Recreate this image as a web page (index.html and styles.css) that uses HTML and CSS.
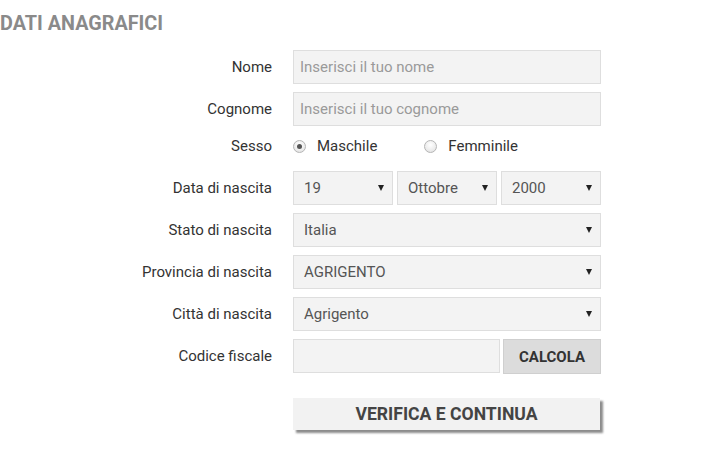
FILE: index.html
```html
<!DOCTYPE html>
<html lang="it">
<head>
<meta charset="utf-8">
<title>Dati anagrafici</title>
<link rel="stylesheet" href="styles.css">
</head>
<body>
<h2 class="title">DATI ANAGRAFICI</h2>
<form class="form">
  <label class="lbl">Nome</label>
  <div class="field"><input class="inp" type="text" placeholder="Inserisci il tuo nome"></div>

  <label class="lbl">Cognome</label>
  <div class="field"><input class="inp" type="text" placeholder="Inserisci il tuo cognome"></div>

  <label class="lbl lbl-radio">Sesso</label>
  <div class="field radios">
    <span class="radio-opt"><span class="radio checked"></span>Maschile</span>
    <span class="radio-opt"><span class="radio"></span>Femminile</span>
  </div>

  <label class="lbl">Data di nascita</label>
  <div class="field dates">
    <div class="sel"><span>19</span><i class="arrow"></i></div>
    <div class="sel"><span>Ottobre</span><i class="arrow"></i></div>
    <div class="sel"><span>2000</span><i class="arrow"></i></div>
  </div>

  <label class="lbl">Stato di nascita</label>
  <div class="field"><div class="sel"><span>Italia</span><i class="arrow"></i></div></div>

  <label class="lbl">Provincia di nascita</label>
  <div class="field"><div class="sel"><span>AGRIGENTO</span><i class="arrow"></i></div></div>

  <label class="lbl">Città di nascita</label>
  <div class="field"><div class="sel"><span>Agrigento</span><i class="arrow"></i></div></div>

  <label class="lbl">Codice fiscale</label>
  <div class="field cf">
    <input class="inp" type="text">
    <button type="button" class="btn-calc">CALCOLA</button>
  </div>

  <div class="spacer"></div>
  <div class="field submit-wrap">
    <button type="button" class="btn-submit">VERIFICA E CONTINUA</button>
  </div>
</form>
</body>
</html>
```

FILE: styles.css
```css
html, body {
  margin: 0;
  padding: 0;
  background: #ffffff;
}
html {
  min-height: 100%;
}
body {
  min-height: 450px;
  font-family: Roboto, "Liberation Sans", sans-serif;
  font-size: 15px;
  color: #333333;
}
.title {
  margin: 0;
  padding: 13px 0 0 0;
  font-size: 19.8px;
  line-height: 22px;
  font-weight: 700;
  color: #8a8a8a;
}
.form {
  margin-top: 15px;
  padding-bottom: 20px;
  display: grid;
  grid-template-columns: 272px 308px;
  grid-template-rows: 34px 34px 29px 34px 34px 34px 34px 34px 52px;
  column-gap: 21px;
  row-gap: 8px;
}
.lbl {
  display: flex;
  align-items: center;
  justify-content: flex-end;
  font-size: 15px;
  color: #333333;
}
.lbl-radio {
  align-self: start;
  height: 24px;
}
.field {
  display: flex;
  min-width: 0;
}
.inp {
  box-sizing: border-box;
  width: 100%;
  height: 34px;
  margin: 0;
  padding: 0 6px;
  border: 1px solid #dedede;
  background: #f3f3f3;
  font-family: Roboto, "Liberation Sans", sans-serif;
  font-size: 15px;
  color: #555555;
  outline: none;
}
.inp::placeholder {
  color: #9a9a9a;
  opacity: 1;
}
.radios {
  align-items: center;
  height: 24px;
  align-self: start;
}
.radio-opt {
  display: inline-flex;
  align-items: center;
  font-size: 15px;
  color: #333333;
}
.radio-opt + .radio-opt {
  margin-left: 47px;
}
.radio {
  box-sizing: border-box;
  width: 13px;
  height: 13px;
  border-radius: 50%;
  border: 1px solid #b5b5b5;
  background: radial-gradient(circle at 50% 35%, #ffffff 0%, #ececec 60%, #dcdcdc 100%);
  margin-right: 11px;
  display: inline-flex;
  align-items: center;
  justify-content: center;
}
.radio.checked::after {
  content: "";
  width: 5px;
  height: 5px;
  border-radius: 50%;
  background: #555555;
}
.dates {
  display: grid;
  grid-template-columns: 100px 100px 100px;
  column-gap: 4px;
}
.sel {
  box-sizing: border-box;
  width: 100%;
  height: 34px;
  border: 1px solid #dedede;
  background: #f3f3f3;
  display: flex;
  align-items: center;
  justify-content: space-between;
  padding: 0 8px 0 10px;
  font-size: 15px;
  color: #555555;
}
.arrow {
  width: 0;
  height: 0;
  border-left: 3px solid transparent;
  border-right: 3px solid transparent;
  border-top: 6px solid #222222;
}
.cf {
  gap: 3px;
}
.cf .inp {
  flex: 1 1 auto;
  width: auto;
  min-width: 0;
}
.btn-calc {
  flex: 0 0 98px;
  width: 98px;
  height: 35px;
  margin: 0;
  padding: 0;
  border: 1px solid #cfcfcf;
  background: #dcdcdc;
  font-family: Roboto, "Liberation Sans", sans-serif;
  font-weight: 700;
  font-size: 15px;
  color: #333333;
}
.spacer {
  height: 34px;
}
.submit-wrap {
  padding-top: 17px;
  align-items: flex-start;
}
.btn-submit {
  width: 307px;
  height: 32px;
  margin: 0;
  padding: 0;
  border: none;
  background: #f2f2f2;
  box-shadow: 3px 3px 2px #8c8c8c;
  font-family: Roboto, "Liberation Sans", sans-serif;
  font-weight: 700;
  font-size: 17.6px;
  color: #444444;
}
```
